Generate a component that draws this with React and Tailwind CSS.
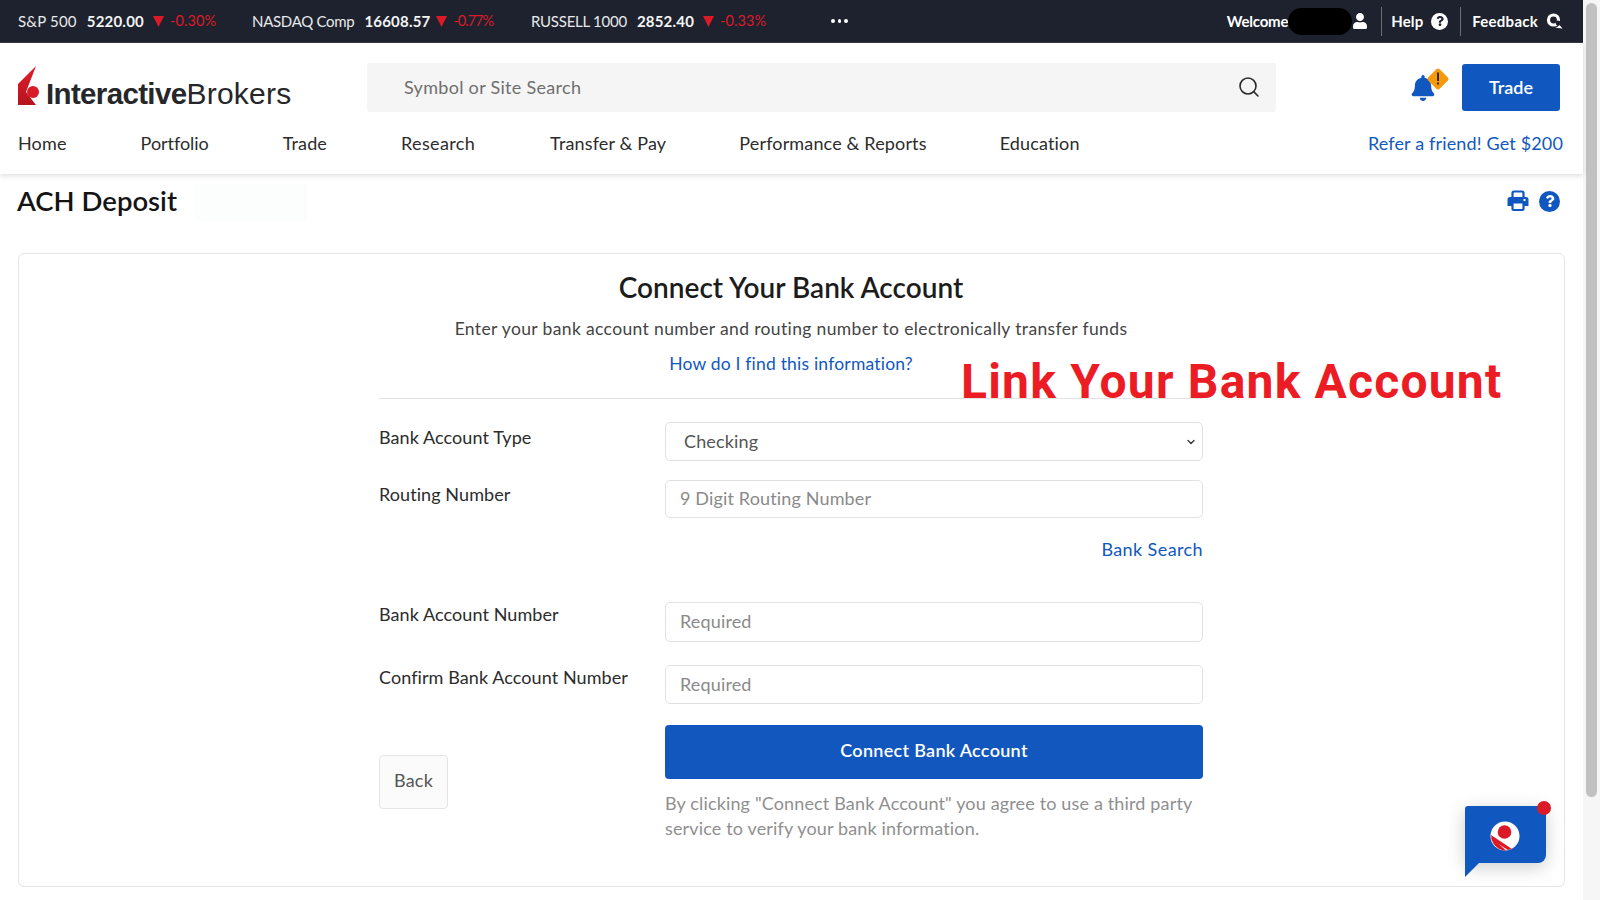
import React from "react";
import { FaBell, FaUser, FaQuestion } from "react-icons/fa";
import { Search, ChevronDown } from "lucide-react";

function Tick({ name, value, pct, className, nameClass, arrowClass, pctClass }) {
  return (
    <div className={"flex items-center " + className}>
      <span className={"text-[15px] text-[#e8e9ea] " + nameClass}>{name}</span>
      <span className="ml-[10px] text-[15px] font-bold text-[#f4f4f4] tracking-[0.2px]">{value}</span>
      <svg className={arrowClass} width="11" height="11" viewBox="0 0 11 11"><path d="M0 0h11L5.5 11z" fill="#dc1a27" /></svg>
      <span className={"ml-[6px] text-[14.5px] text-[#dc1a27] " + pctClass}>{pct}</span>
    </div>
  );
}

function TopBar() {
  return (
    <div className="h-[43px] bg-[#1e222e] flex items-center pl-[18px] pr-[20px] shrink-0 border-b border-[#3a3d47]">
      <Tick name="S&P 500" value="5220.00" pct="-0.30%" className="w-[234px]" nameClass="tracking-[0.2px]" arrowClass="ml-[9px]" pctClass="tracking-[0.1px]" />
      <Tick name="NASDAQ Comp" value="16608.57" pct="-0.77%" className="w-[279px]" nameClass="tracking-[-0.3px]" arrowClass="ml-[6px]" pctClass="tracking-[-1px]" />
      <Tick name="RUSSELL 1000" value="2852.40" pct="-0.33%" className="w-[300px]" nameClass="tracking-[-0.25px]" arrowClass="ml-[9px]" pctClass="tracking-[0.1px]" />
      <div className="flex gap-[3px]">
        <span className="w-[3.5px] h-[3.5px] rounded-full bg-white" />
        <span className="w-[3.5px] h-[3.5px] rounded-full bg-white" />
        <span className="w-[3.5px] h-[3.5px] rounded-full bg-white" />
      </div>
      <div className="ml-auto flex items-center text-white text-[15px] font-bold">
        <span className="tracking-[-0.2px]">Welcome</span>
        <span className="w-[64px] h-[27px] rounded-[14px] bg-black" />
        <FaUser className="text-white" size={16} />
        <span className="w-px h-[29px] bg-[#6a6d76] ml-[13px]" />
        <span className="ml-[9px] tracking-[0.1px]">Help</span>
        <span className="ml-[8px] w-[17px] h-[17px] rounded-full bg-white flex items-center justify-center">
          <FaQuestion className="text-[#1e222e]" size={10} />
        </span>
        <span className="w-px h-[29px] bg-[#6a6d76] ml-[12px]" />
        <span className="ml-[11px] tracking-[0.25px]">Feedback</span>
        <svg className="ml-[8px]" width="17" height="16" viewBox="0 0 17 16">
          <circle cx="7.5" cy="7" r="5" fill="none" stroke="#fff" strokeWidth="3.2" />
          <path d="M7 14.5c3 .5 5-.5 6.5-2.5l3 3.5z" fill="#fff" />
          <circle cx="12" cy="10" r="2.4" fill="#1e222e" />
        </svg>
      </div>
    </div>
  );
}

function Logo() {
  return (
    <div className="flex items-start w-[349px] h-[40px] -mt-[2px]">
      <svg className="shrink-0" width="22" height="40" viewBox="0 0 22 40">
        <defs>
          <linearGradient id="lg" x1="0" y1="0" x2="0" y2="1">
            <stop offset="0" stopColor="#e01d2b" />
            <stop offset="1" stopColor="#b5141f" />
          </linearGradient>
        </defs>
        <path d="M0 18 L18 0 L8 26 L18 39 L0 39z" fill="url(#lg)" />
        <circle cx="15" cy="26" r="6" fill="#d81b28" />
      </svg>
      <span className="ml-[6px] mt-[11px] text-[29.5px] leading-[34px] text-[#26272b] whitespace-nowrap font-['Liberation_Sans',sans-serif]">
        <b className="tracking-[-0.65px]">Interactive</b>
        <span className="text-[30px] tracking-[0.25px]">Brokers</span>
      </span>
    </div>
  );
}

function Header() {
  return (
    <div className="h-[131px] bg-white shrink-0 shadow-[0_2px_5px_rgba(0,0,0,0.12)] relative z-10">
      <div className="flex items-center h-[50px] mt-[19px] pl-[18px] pr-[23px]">
        <Logo />
        <div className="w-[909px] h-[49px] bg-[#f5f5f5] rounded-[3px] flex items-center pl-[37px] pr-[15px]">
          <span className="text-[18px] text-[#6f6f6f] tracking-[0.3px]">Symbol or Site Search</span>
          <Search className="ml-auto text-[#2b2b2b]" size={24} strokeWidth={1.6} />
        </div>
        <div className="ml-auto flex items-center">
          <div className="relative w-[26px] h-[28px] mt-[3px] -ml-[1px]">
            <FaBell className="text-[#1058c0]" size={26} />
            <svg className="absolute left-[15px] top-[-9px]" width="26" height="26" viewBox="0 0 26 26">
              <rect x="5" y="5" width="16" height="16" rx="2" transform="rotate(45 13 13)" fill="#f59a0c" />
              <rect x="12" y="6.5" width="2" height="8.5" fill="#3a2a10" />
              <rect x="12" y="16.5" width="2" height="2" fill="#3a2a10" />
            </svg>
          </div>
          <button className="ml-[26px] w-[98px] h-[47px] rounded-[3px] bg-[#1058c0] text-white text-[18px] font-semibold">Trade</button>
        </div>
      </div>
      <div className="flex items-center h-[24px] mt-[19px] pl-[18px] pr-[20px] text-[18px] text-[#2c2c2c] tracking-[0.15px]">
        <span>Home</span>
        <span className="ml-[74px] tracking-[-0.05px]">Portfolio</span>
        <span className="ml-[74px]">Trade</span>
        <span className="ml-[74px] tracking-[0.35px]">Research</span>
        <span className="ml-[75px]">Transfer &amp; Pay</span>
        <span className="ml-[73px]">Performance &amp; Reports</span>
        <span className="ml-[73px]">Education</span>
        <span className="ml-auto text-[#1058c0]">Refer a friend! Get $200</span>
      </div>
    </div>
  );
}

function Row({ label, top, labelPad, children }) {
  return (
    <div className={"flex " + top}>
      <div className={"w-[286px] text-[18px] text-[#2c2c2c] tracking-[0.08px] leading-[24px] shrink-0 " + labelPad}>{label}</div>
      {children}
    </div>
  );
}

function Field({ placeholder, h }) {
  return (
    <input
      readOnly
      placeholder={placeholder}
      className={"flex-1 min-w-0 rounded-[5px] border border-[#e2e2e2] bg-white px-[14px] pb-[2px] text-[18px] text-[#555] placeholder:text-[#8a8a8a] tracking-[0.15px] " + h}
    />
  );
}

function FormCard() {
  return (
    <div className="ml-[18px] mr-[18px] h-[634px] border border-[#e5e5e5] rounded-[6px] bg-white relative">
      <div className="w-[824px] ml-[360px] pt-[15px]">
        <h2 className="text-center text-[28px] leading-[36px] font-semibold text-[#1c1c1c]">Connect Your Bank Account</h2>
        <p className="text-center text-[17.5px] leading-[24px] text-[#444] mt-[12px] tracking-[0.36px]">Enter your bank account number and routing number to electronically transfer funds</p>
        <p className="text-center text-[17.5px] leading-[24px] text-[#1058c0] mt-[11px] tracking-[0.2px]">How do I find this information?</p>
        <div className="h-px bg-[#e3e3e3] mt-[22px]" />

        <Row label="Bank Account Type" top="mt-[23px]" labelPad="pt-[3px]">
          <div className="flex-1 relative">
            <select className="appearance-none w-full h-[39px] rounded-[5px] border border-[#e2e2e2] bg-white pl-[18px] pr-[4px] text-[18px] text-[#555] tracking-[0.15px]">
              <option>Checking</option>
            </select>
            <ChevronDown className="absolute right-[6px] top-[14px] text-[#333]" size={12} strokeWidth={2.6} />
          </div>
        </Row>
        <Row label="Routing Number" top="mt-[19px]" labelPad="pt-[2px]">
          <Field placeholder="9 Digit Routing Number" h="h-[38px]" />
        </Row>
        <div className="text-right text-[18px] leading-[24px] text-[#1058c0] mt-[19px] tracking-[0.4px]">Bank Search</div>
        <Row label="Bank Account Number" top="mt-[41px]">
          <Field placeholder="Required" h="h-[40px]" />
        </Row>
        <Row label="Confirm Bank Account Number" top="mt-[23px]">
          <Field placeholder="Required" h="h-[39px]" />
        </Row>
        <div className="flex mt-[21px]">
          <div className="w-[286px] shrink-0 pt-[30px]">
            <button className="w-[69px] h-[54px] rounded-[4px] border border-[#e5e5e5] bg-[#fbfbfb] text-[18px] text-[#555] pb-[4px] tracking-[0.2px]">Back</button>
          </div>
          <div className="flex-1">
            <button className="w-full h-[54px] rounded-[4px] bg-[#1257bd] text-white text-[18px] font-semibold pb-[4px] tracking-[0.3px]">Connect Bank Account</button>
            <p className="mt-[12px] text-[18px] leading-[25px] text-[#8f8f8f] tracking-[0.15px]">By clicking "Connect Bank Account" you agree to use a third party service to verify your bank information.</p>
          </div>
        </div>
      </div>
      <div className="absolute left-[942px] top-[98px] text-[48px] leading-[60px] font-bold text-[#ec1c24] whitespace-nowrap font-['Roboto',sans-serif] tracking-[1.2px]">Link Your Bank Account</div>
    </div>
  );
}

function Chat() {
  return (
    <div className="absolute left-[1465px] top-[806px] w-[81px] h-[57px] bg-[#1058c0] rounded-[3px] rounded-br-[8px] rounded-bl-none shadow-[0_4px_18px_rgba(0,0,0,0.2)] z-20">
      <svg className="absolute left-0 top-[56px]" width="15" height="15" viewBox="0 0 15 15"><path d="M0 0h15L0 15z" fill="#1058c0" /></svg>
      <span className="absolute right-[-5px] top-[-5px] w-[14px] h-[14px] rounded-full bg-[#dc1a27]" />
      <svg className="absolute left-[25px] top-[15px]" width="30" height="30" viewBox="0 0 30 30">
        <circle cx="15" cy="15" r="14.5" fill="#fff" />
        <path d="M1 16 L16 29.5 C12 30 3 27 1 16z" fill="#dc1a27" />
        <path d="M1 14 L2 19 L18 29 L22 28z" fill="#dc1a27" />
        <circle cx="14.5" cy="11" r="6.8" fill="#dc1a27" />
      </svg>
    </div>
  );
}

export default function App() {
  return (
    <div className="w-[1600px] h-[900px] overflow-hidden flex bg-white font-['Lato',sans-serif] relative">
      <div className="w-[1583px] h-full flex flex-col shrink-0">
        <TopBar />
        <Header />
        <div className="h-[79px] shrink-0 flex items-start pl-[17px] pr-[23px] pt-[9px]">
          <h1 className="text-[27.5px] leading-[36px] font-semibold text-[#141414]">ACH Deposit</h1>
          <div className="ml-[18px] w-[112px] h-[38px] bg-[#fbfefc]" />
          <div className="ml-auto flex items-center gap-[10px] mt-[7px]">
            <svg width="22" height="22" viewBox="0 0 22 22">
              <path d="M5.5 8V3a1.5 1.5 0 0 1 1.500-1.500h8A1.500 1.500 0 0 1 16.500 3v5" fill="none" stroke="#1058c0" strokeWidth="2.2" />
              <path d="M3 7h16a2.500 2.500 0 0 1 2.500 2.500V16H.5V9.500A2.500 2.500 0 0 1 3 7z" fill="#1058c0" />
              <rect x="5.500" y="12.500" width="11" height="7.500" rx="1" fill="#fff" stroke="#1058c0" strokeWidth="2.2" />
              <rect x="16.500" y="9" width="2" height="2" fill="#fff" />
            </svg>
            <span className="w-[21px] h-[21px] rounded-full bg-[#1058c0] flex items-center justify-center">
              <FaQuestion className="text-white" size={12} />
            </span>
          </div>
        </div>
        <FormCard />
      </div>
      <div className="flex-1 bg-[#f6f6f6] pt-[3px] flex justify-center">
        <div className="w-[11px] h-[794px] rounded-full bg-[#c1c1c1]" />
      </div>
      <Chat />
    </div>
  );
}
